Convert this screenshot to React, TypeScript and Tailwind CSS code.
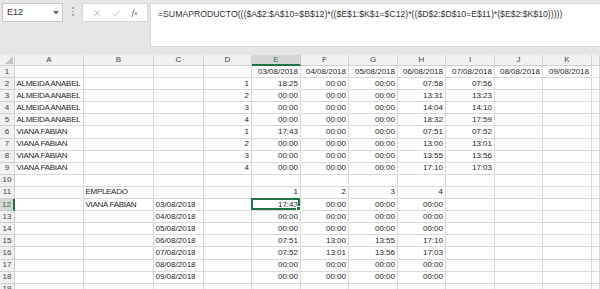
import React from 'react';

const COLS = 'grid grid-cols-[15px_69px_70px_50px_48px_49px_48px_49px_48px_49px_48px_49px_8px]';
const LETTERS = ['A', 'B', 'C', 'D', 'E', 'F', 'G', 'H', 'I', 'J', 'K', ''];

const FORMULA = '=SUMAPRODUCTO((($A$2:$A$10=$B$12)*(($E$1:$K$1=$C12)*(($D$2:$D$10=E$11)*($E$2:$K$10)))))';

type Cell = string | number | null;

// columns A..K (11 values) + trailing L
const rows: Cell[][] = [
  [null, null, null, null, '03/08/2018', '04/08/2018', '05/08/2018', '06/08/2018', '07/08/2018', '08/08/2018', '09/08/2018'],
  ['ALMEIDA ANABEL', null, null, 1, '18:25', '00:00', '00:00', '07:58', '07:56', null, null],
  ['ALMEIDA ANABEL', null, null, 2, '00:00', '00:00', '00:00', '13:31', '13:23', null, null],
  ['ALMEIDA ANABEL', null, null, 3, '00:00', '00:00', '00:00', '14:04', '14:10', null, null],
  ['ALMEIDA ANABEL', null, null, 4, '00:00', '00:00', '00:00', '18:32', '17:59', null, null],
  ['VIANA FABIAN', null, null, 1, '17:43', '00:00', '00:00', '07:51', '07:52', null, null],
  ['VIANA FABIAN', null, null, 2, '00:00', '00:00', '00:00', '13:00', '13:01', null, null],
  ['VIANA FABIAN', null, null, 3, '00:00', '00:00', '00:00', '13:55', '13:56', null, null],
  ['VIANA FABIAN', null, null, 4, '00:00', '00:00', '00:00', '17:10', '17:03', null, null],
  [null, null, null, null, null, null, null, null, null, null, null],
  [null, 'EMPLEADO', null, null, 1, 2, 3, 4, null, null, null],
  [null, 'VIANA FABIAN', '03/08/2018', null, '17:43', '00:00', '00:00', '00:00', null, null, null],
  [null, null, '04/08/2018', null, '00:00', '00:00', '00:00', '00:00', null, null, null],
  [null, null, '05/08/2018', null, '00:00', '00:00', '00:00', '00:00', null, null, null],
  [null, null, '06/08/2018', null, '07:51', '13:00', '13:55', '17:10', null, null, null],
  [null, null, '07/08/2018', null, '07:52', '13:01', '13:56', '17:03', null, null, null],
  [null, null, '08/08/2018', null, '00:00', '00:00', '00:00', '00:00', null, null, null],
  [null, null, '09/08/2018', null, '00:00', '00:00', '00:00', '00:00', null, null, null],
  [null, null, null, null, null, null, null, null, null, null, null],
];

function isRight(v: Cell, col: number) {
  if (typeof v === 'number') return true;
  if (v === null) return false;
  // dates in C are left aligned (text), times and header dates right aligned
  if (col === 2) return false;
  return /^[0-9]/.test(v);
}

function Toolbar() {
  return (
    <div className="relative h-[55px] bg-[#e6e6e6]">
      <div className="absolute left-[2px] top-[3px] flex h-[19px] w-[61px] items-center justify-between border border-[#c8c8c8] bg-white pl-[4px] pr-[3px] text-[9px] text-[#333]">
        <span>E12</span>
        <svg width="6" height="4" viewBox="0 0 6 4"><path d="M0 0h6L3 3.5z" fill="#666" /></svg>
      </div>
      <div className="absolute left-[72px] top-[7px] flex flex-col gap-[2px]">
        <div className="h-[1.5px] w-[1.5px] bg-[#a8a8a8]" />
        <div className="h-[1.5px] w-[1.5px] bg-[#a8a8a8]" />
        <div className="h-[1.5px] w-[1.5px] bg-[#a8a8a8]" />
      </div>
      <div className="absolute left-[82px] top-[3px] flex h-[19px] w-[66px] items-center justify-around border border-[#d8d8d8] bg-white px-[4px]">
        <svg width="8" height="8" viewBox="0 0 8 8"><path d="M1 1l6 6M7 1L1 7" stroke="#b5b5b5" strokeWidth="0.9" /></svg>
        <svg width="9" height="8" viewBox="0 0 9 8"><path d="M1 4.5l2.2 2.2L8 1.2" stroke="#b5b5b5" strokeWidth="0.9" fill="none" /></svg>
        <span className="font-['Liberation_Serif'] text-[9px] italic text-[#555]">f<span className="text-[7px]">x</span></span>
      </div>
      <div className="absolute left-[150px] right-0 top-[3px] h-[44px] border border-r-0 border-[#d8d8d8] bg-white pl-[7px] pt-[6px] text-[8.7px] text-[#333]">
        {FORMULA}
      </div>
    </div>
  );
}

function HeaderRow() {
  return (
    <div className={`${COLS} h-[11px] bg-[#f1f1f1] text-[#444]`}>
      <div className="relative border-b border-r border-[#d0d0d0]">
        <svg className="absolute bottom-[1px] right-[1px]" width="8" height="8" viewBox="0 0 8 8"><path d="M8 0v8H0z" fill="#c4c4c4" /></svg>
      </div>
      {LETTERS.map((l, i) =>
        i === 4 ? (
          <div key={i} className="flex items-center justify-center border-b-2 border-r border-b-[#217346] border-r-[#c6c6c6] bg-[#d6d6d6] text-[#217346]">
            {l}
          </div>
        ) : (
          <div key={i} className="flex items-center justify-center border-b border-r border-[#d0d0d0]">
            {l}
          </div>
        )
      )}
    </div>
  );
}

function DataRow({ n, cells }: { n: number; cells: Cell[] }) {
  const active = n === 12;
  return (
    <div className={`${COLS} h-[12.1px]`}>
      {active ? (
        <div className="flex items-center justify-center border-b border-r-2 border-b-[#c6c6c6] border-r-[#217346] bg-[#d6d6d6] text-[#217346]">
          {n}
        </div>
      ) : (
        <div className="flex items-center justify-center border-b border-r border-[#d0d0d0] bg-[#f1f1f1] text-[#444]">{n}</div>
      )}
      {[...cells, null].map((v, i) => (
        <div
          key={i}
          className={`relative flex items-center overflow-visible whitespace-nowrap border-b border-r border-[#dadada] text-[#262626] ${
            isRight(v, i) ? 'justify-end pr-[2px]' : 'justify-start pl-[1.5px]'
          } ${typeof v === 'string' && /^[A-Z]/.test(v) ? 'tracking-[-0.3px]' : ''}`}
        >
          {v}
          {active && i === 4 ? (
            <div className="absolute -left-px -top-px h-[calc(100%+1px)] w-[calc(100%+1px)] border-2 border-[#217346]">
              <div className="absolute -bottom-[3px] -right-[3px] h-[5px] w-[5px] border border-white bg-[#217346]" />
            </div>
          ) : null}
        </div>
      ))}
    </div>
  );
}

export default function App() {
  return (
    <div className="h-[289px] w-[600px] overflow-hidden bg-white font-['Liberation_Sans',Arial,sans-serif] text-[8px] leading-none">
      <Toolbar />
      <HeaderRow />
      {rows.map((r, i) => (
        <DataRow key={i} n={i + 1} cells={r} />
      ))}
    </div>
  );
}
